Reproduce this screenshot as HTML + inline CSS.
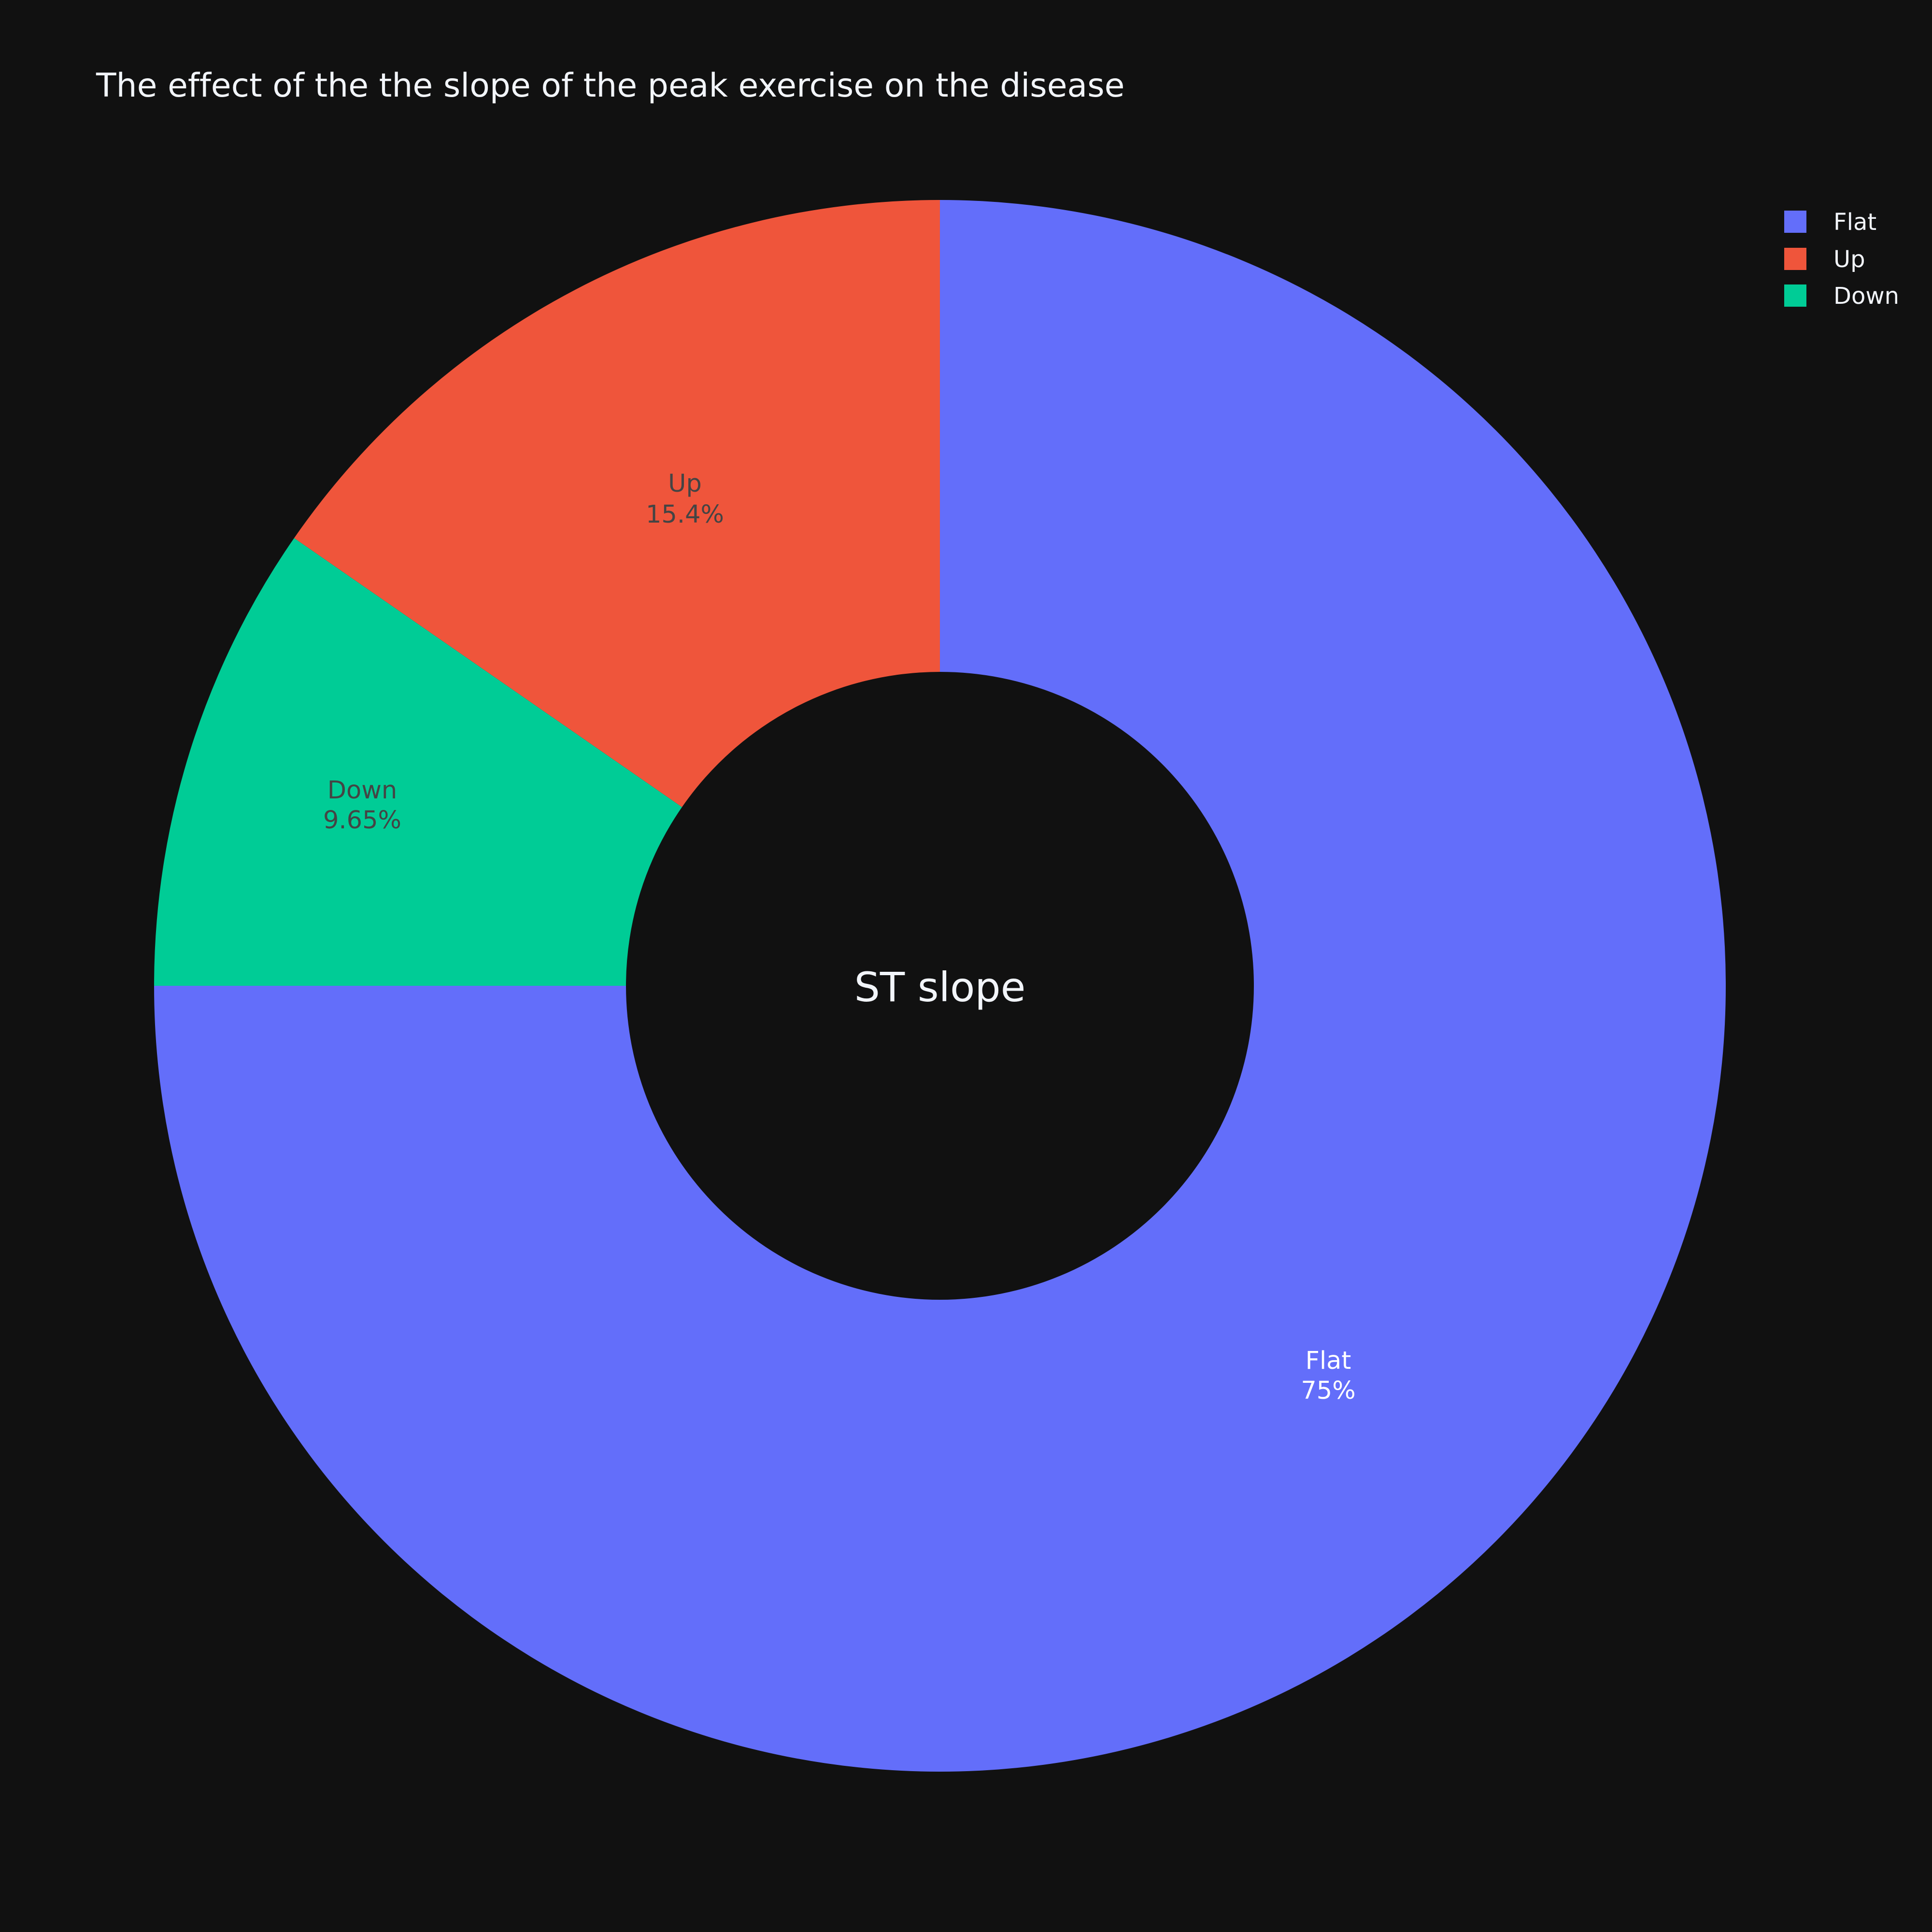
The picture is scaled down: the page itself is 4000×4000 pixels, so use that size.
<!DOCTYPE html>
<html><head><meta charset="utf-8"><style>html,body{margin:0;padding:0;background:#111111;}svg{display:block}text{font-variant-ligatures:none}</style></head>
<body>
<svg width="4000" height="4000" viewBox="0 0 4000 4000" xmlns="http://www.w3.org/2000/svg" font-family="'DejaVu Sans','Liberation Sans',sans-serif">
<rect width="4000" height="4000" fill="#111111"/>
<path d="M1946,414 A1627,1627 0 1 1 319,2041 L1296,2041 A650,650 0 1 0 1946,1391 Z" fill="#636efa"/>
<path d="M319,2041 A1627,1627 0 0 1 609,1114 L1412,1671 A650,650 0 0 0 1296,2041 Z" fill="#00cc96"/>
<path d="M609,1114 A1627,1627 0 0 1 1946,414 L1946,1391 A650,650 0 0 0 1412,1671 Z" fill="#EF553B"/>
<text x="199" y="200" font-size="68" fill="#f2f5fa">The effect of the the slope of the peak exercise on the disease</text>
<g font-size="51" text-anchor="middle">
<text x="1418" y="1018" fill="#444">Up</text>
<text x="1418" y="1082" fill="#444">15.4%</text>
<text x="750" y="1653" fill="#444">Down</text>
<text x="750" y="1715" fill="#444">9.65%</text>
<text x="2750" y="2834" fill="#fff">Flat</text>
<text x="2750" y="2896" fill="#fff">75%</text>
</g>
<text x="1946" y="2073" font-size="84" fill="#f2f5fa" text-anchor="middle">ST slope</text>
<rect x="3694" y="436" width="46" height="46" fill="#636efa"/>
<rect x="3694" y="513" width="46" height="46" fill="#EF553B"/>
<rect x="3694" y="589" width="46" height="46" fill="#00cc96"/>
<g font-size="48" fill="#f2f5fa">
<text x="3796" y="476">Flat</text>
<text x="3796" y="553">Up</text>
<text x="3796" y="629">Down</text>
</g>
</svg>
</body></html>
